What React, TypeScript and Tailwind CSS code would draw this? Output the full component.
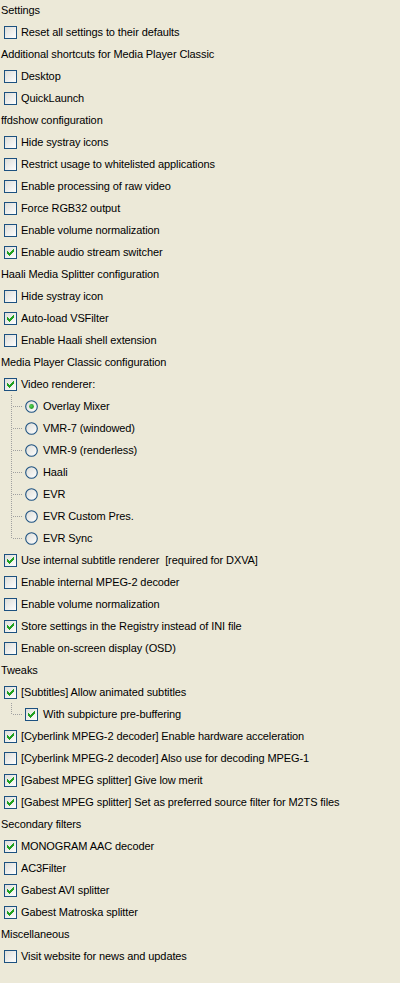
import React from 'react';

type Row =
  | { kind: 'head'; label: string }
  | { kind: 'check'; label: string; on?: boolean; sub?: 'mid' | 'last' }
  | { kind: 'radio'; label: string; on?: boolean; sub: 'mid' | 'last' };

const ROWS: Row[] = [
  { kind: 'head', label: 'Settings' },
  { kind: 'check', label: 'Reset all settings to their defaults' },
  { kind: 'head', label: 'Additional shortcuts for Media Player Classic' },
  { kind: 'check', label: 'Desktop' },
  { kind: 'check', label: 'QuickLaunch' },
  { kind: 'head', label: 'ffdshow configuration' },
  { kind: 'check', label: 'Hide systray icons' },
  { kind: 'check', label: 'Restrict usage to whitelisted applications' },
  { kind: 'check', label: 'Enable processing of raw video' },
  { kind: 'check', label: 'Force RGB32 output' },
  { kind: 'check', label: 'Enable volume normalization' },
  { kind: 'check', label: 'Enable audio stream switcher', on: true },
  { kind: 'head', label: 'Haali Media Splitter configuration' },
  { kind: 'check', label: 'Hide systray icon' },
  { kind: 'check', label: 'Auto-load VSFilter', on: true },
  { kind: 'check', label: 'Enable Haali shell extension' },
  { kind: 'head', label: 'Media Player Classic configuration' },
  { kind: 'check', label: 'Video renderer:', on: true },
  { kind: 'radio', label: 'Overlay Mixer', on: true, sub: 'mid' },
  { kind: 'radio', label: 'VMR-7 (windowed)', sub: 'mid' },
  { kind: 'radio', label: 'VMR-9 (renderless)', sub: 'mid' },
  { kind: 'radio', label: 'Haali', sub: 'mid' },
  { kind: 'radio', label: 'EVR', sub: 'mid' },
  { kind: 'radio', label: 'EVR Custom Pres.', sub: 'mid' },
  { kind: 'radio', label: 'EVR Sync', sub: 'last' },
  { kind: 'check', label: 'Use internal subtitle renderer  [required for DXVA]', on: true },
  { kind: 'check', label: 'Enable internal MPEG-2 decoder' },
  { kind: 'check', label: 'Enable volume normalization' },
  { kind: 'check', label: 'Store settings in the Registry instead of INI file', on: true },
  { kind: 'check', label: 'Enable on-screen display (OSD)' },
  { kind: 'head', label: 'Tweaks' },
  { kind: 'check', label: '[Subtitles] Allow animated subtitles', on: true },
  { kind: 'check', label: 'With subpicture pre-buffering', on: true, sub: 'last' },
  { kind: 'check', label: '[Cyberlink MPEG-2 decoder] Enable hardware acceleration', on: true },
  { kind: 'check', label: '[Cyberlink MPEG-2 decoder] Also use for decoding MPEG-1' },
  { kind: 'check', label: '[Gabest MPEG splitter] Give low merit', on: true },
  { kind: 'check', label: '[Gabest MPEG splitter] Set as preferred source filter for M2TS files', on: true },
  { kind: 'head', label: 'Secondary filters' },
  { kind: 'check', label: 'MONOGRAM AAC decoder', on: true },
  { kind: 'check', label: 'AC3Filter' },
  { kind: 'check', label: 'Gabest AVI splitter', on: true },
  { kind: 'check', label: 'Gabest Matroska splitter', on: true },
  { kind: 'head', label: 'Miscellaneous' },
  { kind: 'check', label: 'Visit website for news and updates' },
];

// XP style pixel check mark, drawn inside the 11x11 interior
const CHECK_PIXELS: [number, number, number][] = [
  [8, 2, 1],
  [7, 3, 2],
  [2, 4, 1], [6, 4, 3],
  [2, 5, 2], [5, 5, 3],
  [2, 6, 5],
  [3, 7, 3],
  [4, 8, 1],
];

const CheckBox = ({ on }: { on?: boolean }) => (
  <svg width="13" height="13" viewBox="0 0 13 13" className="shrink-0" shapeRendering="crispEdges">
    <defs>
      <linearGradient id="cbg" x1="0" y1="0" x2="1" y2="1">
        <stop offset="0" stopColor="#dcdcd7" />
        <stop offset="1" stopColor="#ffffff" />
      </linearGradient>
    </defs>
    <rect x="0.5" y="0.5" width="12" height="12" fill="url(#cbg)" stroke="#1c5180" />
    {on &&
      CHECK_PIXELS.map(([x, y, w], i) => (
        <rect key={i} x={x + 1} y={y + 1} width={w} height={1} fill="#21a121" />
      ))}
  </svg>
);

const Radio = ({ on }: { on?: boolean }) => (
  <svg width="13" height="13" viewBox="0 0 13 13" className="shrink-0">
    <defs>
      <linearGradient id="rbg" x1="0" y1="0" x2="1" y2="1">
        <stop offset="0" stopColor="#dcdcd7" />
        <stop offset="1" stopColor="#ffffff" />
      </linearGradient>
      <radialGradient id="rdot" cx="0.4" cy="0.4" r="0.6">
        <stop offset="0" stopColor="#5bd35b" />
        <stop offset="1" stopColor="#1f9a1f" />
      </radialGradient>
    </defs>
    <circle cx="6.5" cy="6.5" r="5.8" fill="url(#rbg)" stroke="#1c5180" strokeWidth="1.1" />
    {on && <circle cx="6.5" cy="6.5" r="2.4" fill="url(#rdot)" />}
  </svg>
);

// dotted tree connector for child rows
const Tree = ({ last }: { last?: boolean }) => (
  <svg width="25" height="22" viewBox="0 0 25 22" className="shrink-0" shapeRendering="crispEdges">
    {Array.from({ length: last ? 6 : 11 }).map((_, i) => (
      <rect key={'v' + i} x="11" y={i * 2} width="1" height="1" fill="#a0a0a0" />
    ))}
    {Array.from({ length: 5 }).map((_, i) => (
      <rect key={'h' + i} x={13 + i * 2} y="11" width="1" height="1" fill="#a0a0a0" />
    ))}
  </svg>
);

export default function App() {
  return (
    <div
      className="w-[400px] h-[983px] overflow-hidden bg-[#ece9d8] text-[11px] tracking-[-0.1px] text-black"
      style={{ fontFamily: '"Liberation Sans", Arial, sans-serif' }}
    >
      <div className="flex flex-col -mt-px">
        {ROWS.map((r, i) => {
          if (r.kind === 'head') {
            return (
              <div key={i} className="h-[22px] flex items-center pl-px whitespace-pre">
                {r.label}
              </div>
            );
          }
          if (r.sub) {
            return (
              <div key={i} className="h-[22px] flex items-center whitespace-pre">
                <Tree last={r.sub === 'last'} />
                {r.kind === 'radio' ? <Radio on={r.on} /> : <CheckBox on={r.on} />}
                <span className="ml-[5px]">{r.label}</span>
              </div>
            );
          }
          return (
            <div key={i} className="h-[22px] flex items-center pl-1 whitespace-pre">
              <CheckBox on={r.on} />
              <span className="ml-1">{r.label}</span>
            </div>
          );
        })}
      </div>
    </div>
  );
}
